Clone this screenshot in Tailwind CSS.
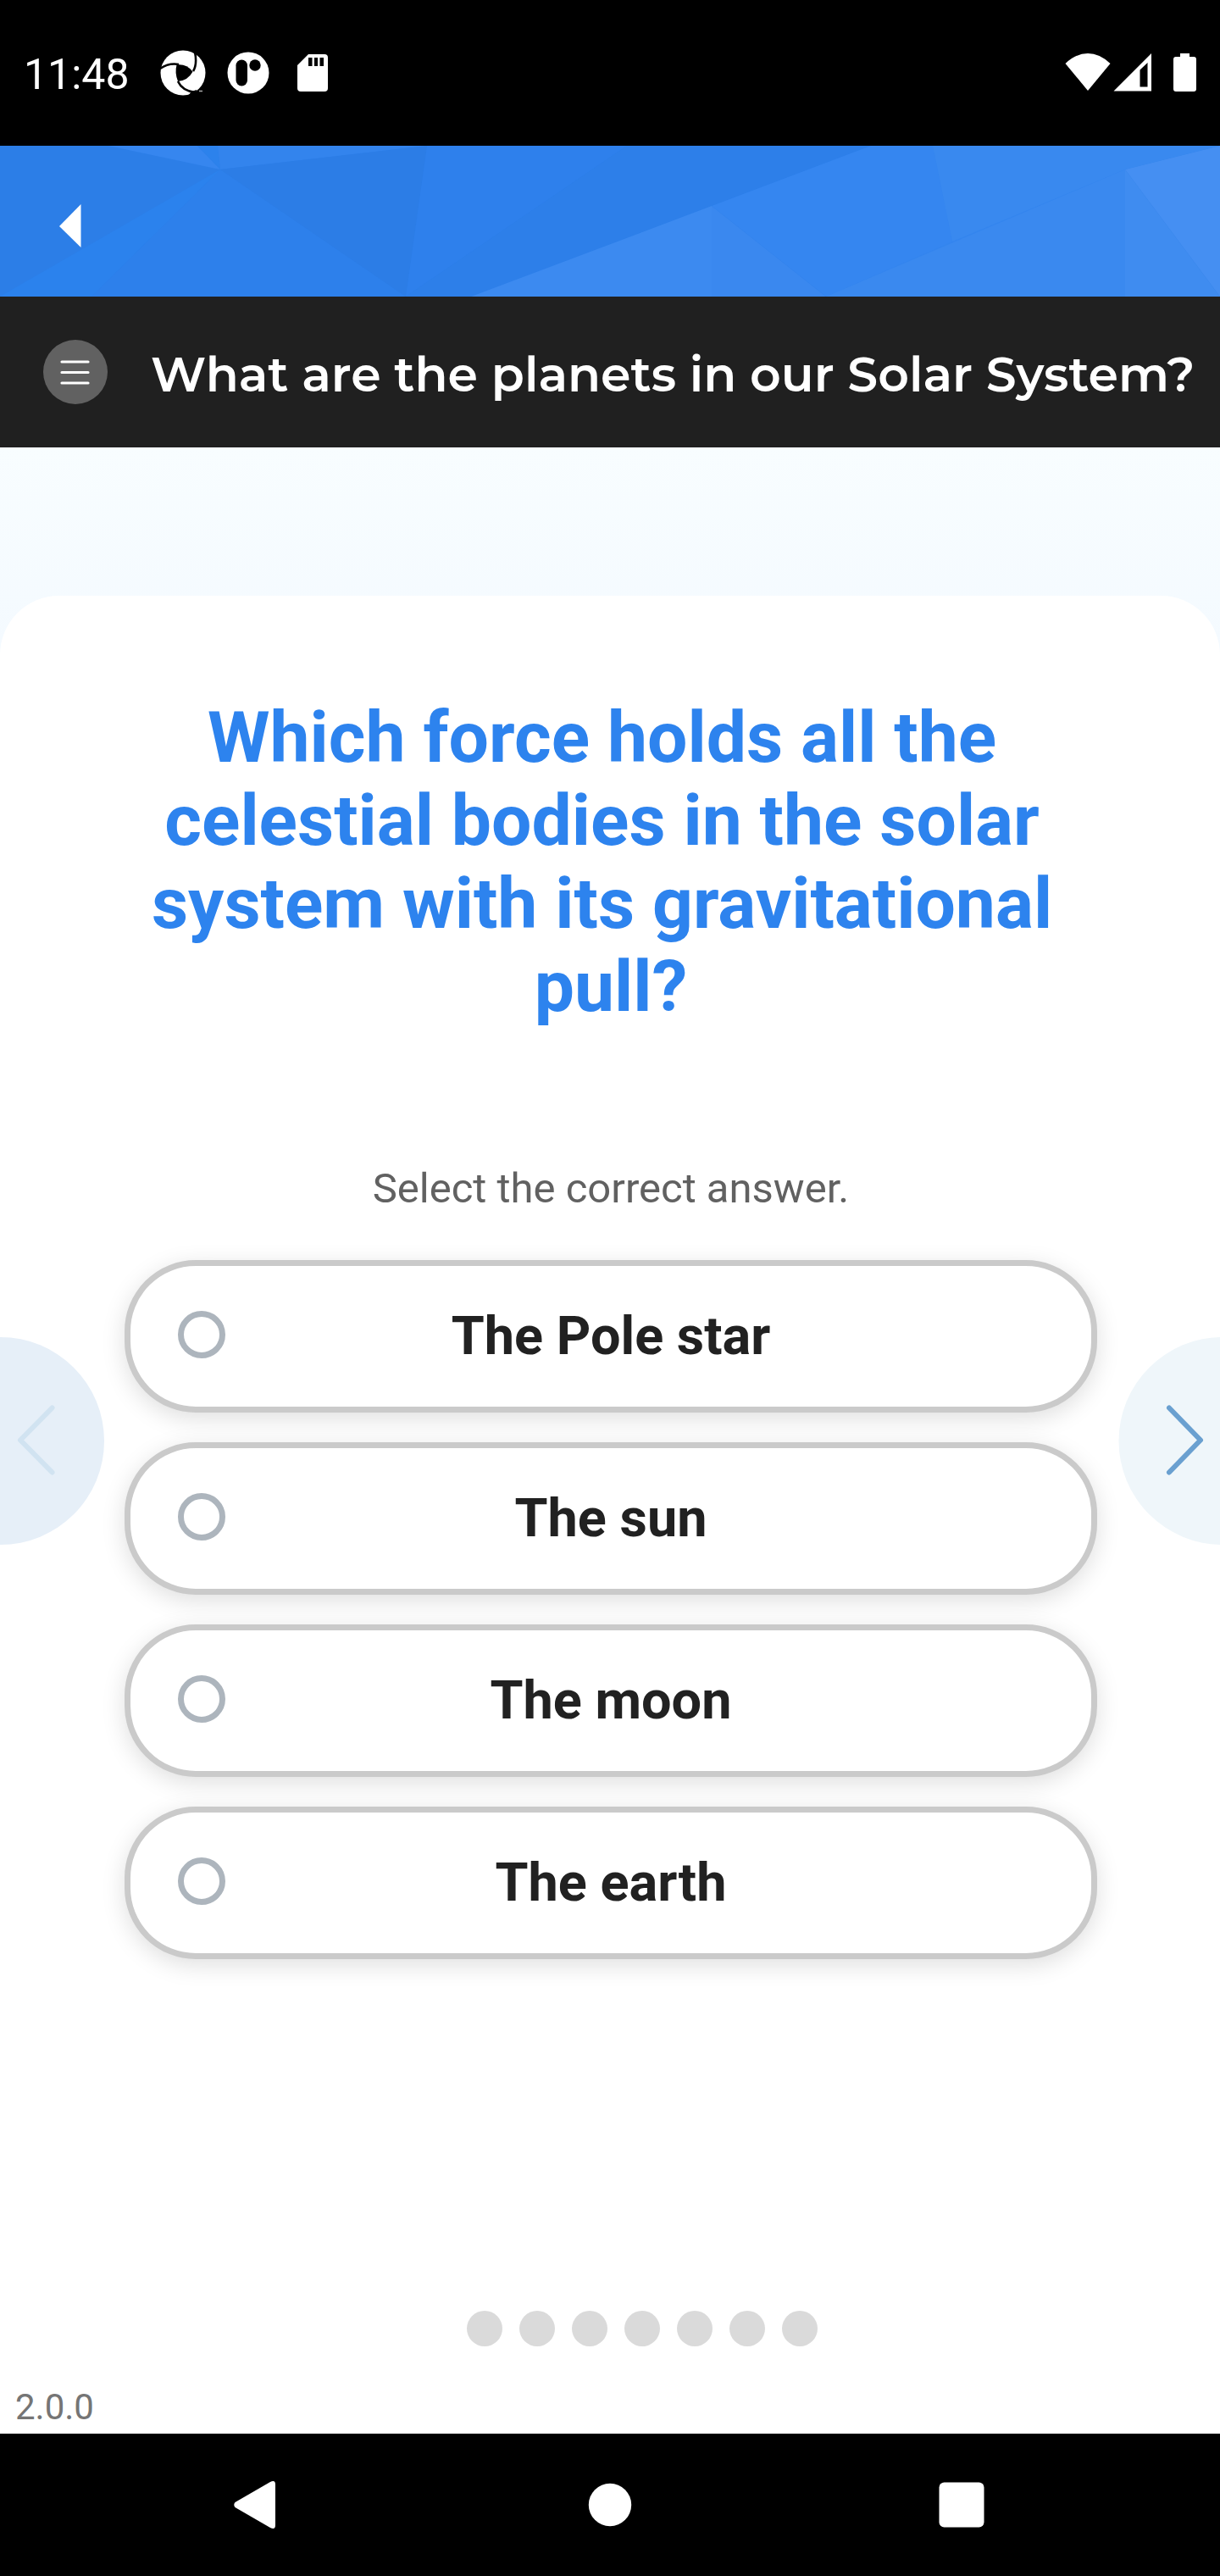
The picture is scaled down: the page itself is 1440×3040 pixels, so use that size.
<!DOCTYPE html>
<html lang="en">
<head>
<meta charset="utf-8">
<title>Quiz</title>
<script src="https://cdn.jsdelivr.net/npm/@tailwindcss/browser@4"></script>
</head>
<body class="bg-white">
<div class="relative flex h-[3040px] w-[1440px] flex-col overflow-hidden bg-white font-['Roboto',sans-serif]">
  <!-- Status bar -->
  <header class="flex h-[172px] shrink-0 items-center justify-between bg-black pr-7 pl-[28px] text-white">
    <div class="flex h-full items-center">
      <span class="mt-[3px] w-[161px] text-[50px] leading-[58px]">11:48</span>
      <svg class="w-[54px] h-[54px]" viewBox="0 0 54 54"><circle cx="27" cy="27" r="26.5" fill="#fff"/><path d="M19.500 17.500Q31 16 38.500 25.500Q33 36 21 37Q17 27 19.500 17.500Z"/><path d="M0 22Q10 15 22 17M39 25Q44 17 41 2M21 37Q26 48 41 50" fill="none" stroke="#000" stroke-width="2.600"/><path d="M37 49L43 47L42 54L33 54Z"/><path d="M46 48.500h4" stroke="#aaa" stroke-width="1.500"/></svg>
      <svg class="ml-[25px] w-[50px] h-[50px]" viewBox="0 0 50 50"><circle cx="25" cy="25" r="24.500" fill="#fff"/><rect x="10.500" y="9.500" width="13.500" height="31" rx="6.750"/><circle cx="33" cy="16" r="6.700"/></svg>
      <svg class="ml-[33px] w-[36px] h-[46px]" viewBox="0 0 36 46"><path fill="#fff" d="M13 1H32Q36 1 36 5V41Q36 45 32 45H4Q0 45 0 41V14Z"/><path d="M13 5h4.500v10H13zM20 5h4v10h-4zM26.500 5H31v10h-4.500z"/></svg>
    </div>
    <div class="flex items-end pb-[2px]">
      <svg class="w-[54px] h-[46px]" viewBox="0 0 54 46"><path fill="#fff" d="M.500 13Q13 1 27 1T53.500 13L27 45Z"/></svg>
      <svg class="ml-[3px] w-[46px] h-[46px]" viewBox="0 0 46 46"><path fill="#fff" fill-rule="evenodd" d="M.500 45.500L45 1V45.500ZM31.500 20.500V40.500H40.500V12Z"/></svg>
      <svg class="ml-[25px] w-[27px] h-[46px]" viewBox="0 0 27 46"><path fill="#fff" d="M8 1H19V5H24Q27 5 27 8V43Q27 46 24 46H3Q0 46 0 43V8Q0 5 3 5H8Z"/></svg>
    </div>
  </header>

  <!-- App bar with faceted background -->
  <div class="h-[178px] shrink-0">
    <svg class="block h-[178px] w-[1440px]" viewBox="0 0 1440 178">
      <rect width="1440" height="178" fill="#2c7ee7"/>
      <path fill="#3686ef" d="M128 0H233L260 28Z"/>
      <path fill="#2c82ec" d="M233 0H257L260 28Z"/>
      <path fill="#3384ed" d="M257 0H504L260 28Z"/>
      <path fill="#2b82ed" d="M0 178L260 28L108 178Z"/>
      <path fill="#2d80eb" d="M108 178L260 28L479 178Z"/>
      <path fill="#2c7de6" d="M260 28L504 0L479 178Z"/>
      <path fill="#2e80ec" d="M504 0H740L479 178Z"/>
      <path fill="#2d7fe9" d="M740 0H1028L556 178H479Z"/>
      <path fill="#3485ee" d="M975 178L1101 0H1328V178Z"/>
      <path fill="#3c8af0" d="M556 178L840 71V178Z"/>
      <path fill="#3a88ef" d="M840 71L975 178H840Z"/>
      <path fill="#3586f0" d="M840 71L1028 0H1101L1124 113L975 178Z"/>
      <path fill="#3989ef" d="M1101 0H1440L1328 28L1124 113Z"/>
      <path fill="#3a89ef" d="M975 178L1328 28V178Z"/>
      <path fill="#3f8cf0" d="M1328 28L1440 178H1328Z"/>
      <path fill="#458ff2" d="M1328 28L1440 0V178Z"/>
      <path fill="#fff" d="M70 95L95.500 69V120Z"/>
    </svg>
  </div>

  <!-- Lesson title -->
  <div class="flex h-[178px] shrink-0 items-center bg-[#202020] pl-[51px] text-white">
    <svg class="h-[76px] w-[76px] shrink-0" viewBox="0 0 76 76"><circle cx="38" cy="38" r="38" fill="#616161"/><path d="M22 26h31M22 38.500h31M22 51h31" stroke="#fff" stroke-width="3.200" stroke-linecap="round"/></svg>
    <h1 class="ml-[51px] mt-[5px] whitespace-nowrap font-['Montserrat','Inter',sans-serif] text-[57px] font-semibold">What are the planets in our Solar System?</h1>
  </div>

  <!-- Question -->
  <main class="flex h-[2344px] shrink-0 flex-col bg-linear-to-b from-[#f8fdff] to-[#f4faff] to-[240px] pt-[175px]">
    <section class="flex flex-1 flex-col items-center rounded-t-[70px] bg-white pt-[119px] pl-[2px]">
      <h2 class="text-center text-[84px] leading-[98px] font-bold text-[#2d83ee]">
        <span class="block whitespace-nowrap">Which force holds all the&nbsp;</span>
        <span class="block whitespace-nowrap">celestial bodies in the solar&nbsp;</span>
        <span class="block whitespace-nowrap">system with its gravitational&nbsp;</span>
        <span class="block">pull?</span>
      </h2>
      <p class="mt-[160px] text-[49px] leading-[58px] text-[#616161]">Select the correct answer.</p>
      <div class="mt-[55px] flex w-[1148px] flex-col gap-[35px]">
        <button class="flex h-[180px] items-center rounded-[84px] border-[7px] border-[#cacaca] bg-white pr-[56px] pl-[56px] shadow-[0_7px_28px_rgba(0,0,0,0.13)]"><span class="mb-[4px] size-[56px] rounded-full border-[7px] border-[#adb5bd]"></span><span class="flex-1 pr-[56px] text-center text-[63px] leading-[74px] font-bold text-[#212121]">The Pole star</span></button>
        <button class="flex h-[180px] items-center rounded-[84px] border-[7px] border-[#cacaca] bg-white pr-[56px] pl-[56px] shadow-[0_7px_28px_rgba(0,0,0,0.13)]"><span class="mb-[4px] size-[56px] rounded-full border-[7px] border-[#adb5bd]"></span><span class="flex-1 pr-[56px] text-center text-[63px] leading-[74px] font-bold text-[#212121]">The sun</span></button>
        <button class="flex h-[180px] items-center rounded-[84px] border-[7px] border-[#cacaca] bg-white pr-[56px] pl-[56px] shadow-[0_7px_28px_rgba(0,0,0,0.13)]"><span class="mb-[4px] size-[56px] rounded-full border-[7px] border-[#adb5bd]"></span><span class="flex-1 pr-[56px] text-center text-[63px] leading-[74px] font-bold text-[#212121]">The moon</span></button>
        <button class="flex h-[180px] items-center rounded-[84px] border-[7px] border-[#cacaca] bg-white pr-[56px] pl-[56px] shadow-[0_7px_28px_rgba(0,0,0,0.13)]"><span class="mb-[4px] size-[56px] rounded-full border-[7px] border-[#adb5bd]"></span><span class="flex-1 pr-[56px] text-center text-[63px] leading-[74px] font-bold text-[#212121]">The earth</span></button>
      </div>
      <div class="mt-[415px] flex gap-[20px] self-start pl-[549px]">
        <i class="size-[42px] rounded-full bg-[#dadada]"></i><i class="size-[42px] rounded-full bg-[#dadada]"></i><i class="size-[42px] rounded-full bg-[#dadada]"></i><i class="size-[42px] rounded-full bg-[#dadada]"></i><i class="size-[42px] rounded-full bg-[#dadada]"></i><i class="size-[42px] rounded-full bg-[#dadada]"></i><i class="size-[42px] rounded-full bg-[#dadada]"></i>
      </div>
      <p class="mt-[47px] self-start pl-[16px] text-[42px] leading-[49px] text-[#757575]">2.0.0</p>
    </section>
  </main>

  <!-- System navigation -->
  <nav class="h-[168px] shrink-0 bg-black">
    <svg class="block h-[168px] w-[1440px]" viewBox="0 0 1440 168" fill="#fff"><path d="M277.500 81L319 57Q325 54 325 60V108Q325 114 319 111L277.500 87Q275 84 277.500 81Z"/><circle cx="720" cy="84" r="25.200"/><rect x="1108.500" y="57.500" width="53" height="53" rx="6"/></svg>
  </nav>

  <!-- Previous / next overlays -->
  <svg class="absolute top-[1578px] left-0 h-[245px] w-[124px]" viewBox="0 0 124 245"><circle cx=".500" cy="122.500" r="122.500" fill="#e6eff8"/><path d="M61.500 83.500L24 121.500L61.500 159.500" fill="none" stroke="#d1e3f1" stroke-width="6" stroke-linecap="round" stroke-linejoin="round"/></svg>
  <svg class="absolute top-[1578px] right-0 h-[245px] w-[120px]" viewBox="0 0 120 245"><circle cx="123" cy="122.500" r="122.500" fill="#eff6fa"/><path d="M60 83.500L97 121.500L60 159.500" fill="none" stroke="#6aa0d0" stroke-width="6" stroke-linecap="round" stroke-linejoin="round"/></svg>
</div>
</body>
</html>
